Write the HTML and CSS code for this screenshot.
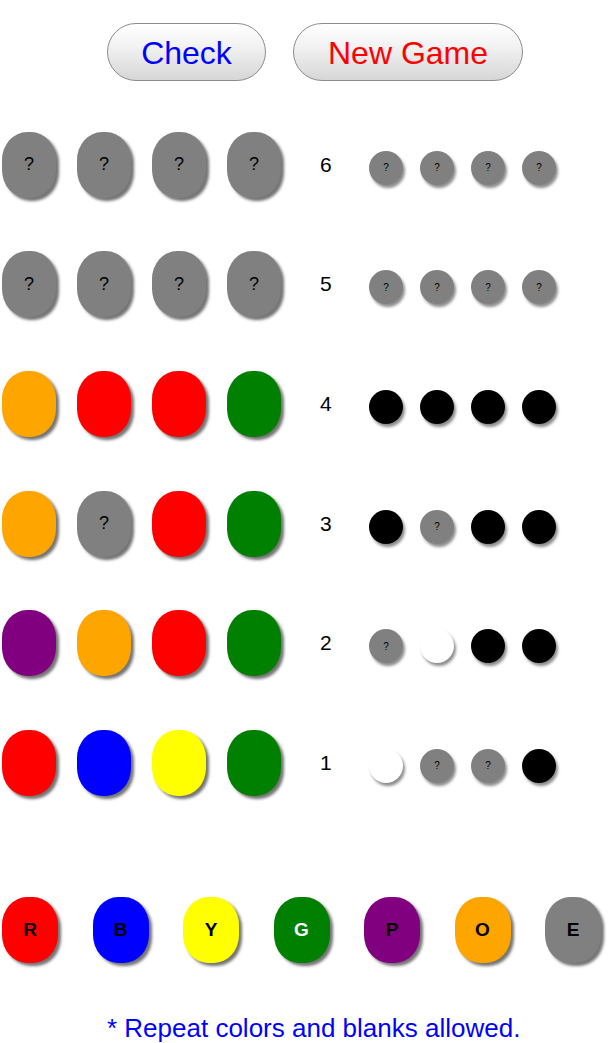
FILE: index.html
```html
<!DOCTYPE html>
<html lang="en">
<head>
    <meta charset="UTF-8">
    <title>Mastermind</title>
    <link rel="stylesheet" href="styles.css">
</head>
<body>
    <div class="buttons">
        <button class="btn btn-check">Check</button>
        <button class="btn btn-new">New Game</button>
    </div>

    <div class="board">
        <div class="row">
            <div class="guess">
                <div class="peg gray">?</div>
                <div class="peg gray">?</div>
                <div class="peg gray">?</div>
                <div class="peg gray">?</div>
            </div>
            <div class="num">6</div>
            <div class="hints">
                <div class="hint gray">?</div>
                <div class="hint gray">?</div>
                <div class="hint gray">?</div>
                <div class="hint gray">?</div>
            </div>
        </div>
        <div class="row">
            <div class="guess">
                <div class="peg gray">?</div>
                <div class="peg gray">?</div>
                <div class="peg gray">?</div>
                <div class="peg gray">?</div>
            </div>
            <div class="num">5</div>
            <div class="hints">
                <div class="hint gray">?</div>
                <div class="hint gray">?</div>
                <div class="hint gray">?</div>
                <div class="hint gray">?</div>
            </div>
        </div>
        <div class="row">
            <div class="guess">
                <div class="peg orange"></div>
                <div class="peg red"></div>
                <div class="peg red"></div>
                <div class="peg green"></div>
            </div>
            <div class="num">4</div>
            <div class="hints">
                <div class="hint black"></div>
                <div class="hint black"></div>
                <div class="hint black"></div>
                <div class="hint black"></div>
            </div>
        </div>
        <div class="row">
            <div class="guess">
                <div class="peg orange"></div>
                <div class="peg gray">?</div>
                <div class="peg red"></div>
                <div class="peg green"></div>
            </div>
            <div class="num">3</div>
            <div class="hints">
                <div class="hint black"></div>
                <div class="hint gray">?</div>
                <div class="hint black"></div>
                <div class="hint black"></div>
            </div>
        </div>
        <div class="row">
            <div class="guess">
                <div class="peg purple"></div>
                <div class="peg orange"></div>
                <div class="peg red"></div>
                <div class="peg green"></div>
            </div>
            <div class="num">2</div>
            <div class="hints">
                <div class="hint gray">?</div>
                <div class="hint white"></div>
                <div class="hint black"></div>
                <div class="hint black"></div>
            </div>
        </div>
        <div class="row">
            <div class="guess">
                <div class="peg red"></div>
                <div class="peg blue"></div>
                <div class="peg yellow"></div>
                <div class="peg green"></div>
            </div>
            <div class="num">1</div>
            <div class="hints">
                <div class="hint white"></div>
                <div class="hint gray">?</div>
                <div class="hint gray">?</div>
                <div class="hint black"></div>
            </div>
        </div>
    </div>

    <div class="palette">
        <div class="peg pick red">R</div>
        <div class="peg pick blue">B</div>
        <div class="peg pick yellow">Y</div>
        <div class="peg pick green light">G</div>
        <div class="peg pick purple">P</div>
        <div class="peg pick orange">O</div>
        <div class="peg pick gray">E</div>
    </div>

    <p class="note">* Repeat colors and blanks allowed.</p>
</body>
</html>
```

FILE: styles.css
```css
body {
    margin: 0;
    background: #fff;
    font-family: "Liberation Sans", Arial, sans-serif;
    width: 609px;
}
.buttons {
    display: flex;
    gap: 27px;
    padding: 23px 0 0 107px;
}
.btn {
    height: 58px;
    border: 1px solid #8c8c8c;
    border-radius: 29px;
    background: linear-gradient(#ffffff, #f2f2f2 40%, #d6d6d6);
    font-family: "Liberation Sans", Arial, sans-serif;
    font-size: 32px;
    padding: 3px 0 0 0;
}
.btn-check {
    width: 159px;
    color: #0000ff;
}
.btn-new {
    width: 230px;
    color: #ff0000;
}
.board {
    margin-top: 24px;
}
.row {
    display: flex;
    align-items: center;
    height: 119.6px;
}
.guess {
    display: flex;
    gap: 21px;
    padding-left: 2px;
}
.peg {
    width: 54px;
    height: 66px;
    border-radius: 25px / 28px;
    box-shadow: 3px 3px 3px rgba(0, 0, 0, 0.55);
    display: flex;
    align-items: center;
    justify-content: center;
    font-size: 18px;
    color: #000;
}
.num {
    width: 18px;
    margin-left: 39px;
    font-size: 21px;
}
.hints {
    display: flex;
    gap: 17px;
    margin-left: 31px;
    padding-top: 6px;
}
.hint {
    width: 34px;
    height: 34px;
    border-radius: 50%;
    box-shadow: 2px 3px 3px rgba(0, 0, 0, 0.45);
    display: flex;
    align-items: center;
    justify-content: center;
    font-size: 10px;
    color: #000;
}
.palette {
    display: flex;
    gap: 34.5px;
    padding-left: 2px;
    margin-top: 74px;
}
.pick {
    width: 56px;
    font-weight: bold;
    font-size: 19px;
}
.light {
    color: #fff;
}
.gray { background: #808080; }
.red { background: #ff0000; }
.blue { background: #0000ff; }
.yellow { background: #ffff00; }
.green { background: #008000; }
.purple { background: #800080; }
.orange { background: #ffa500; }
.black { background: #000; }
.white { background: #fff; }
.note {
    margin: 50px 0 0 0;
    padding-left: 107px;
    color: #0000ff;
    font-size: 26px;
}
```
